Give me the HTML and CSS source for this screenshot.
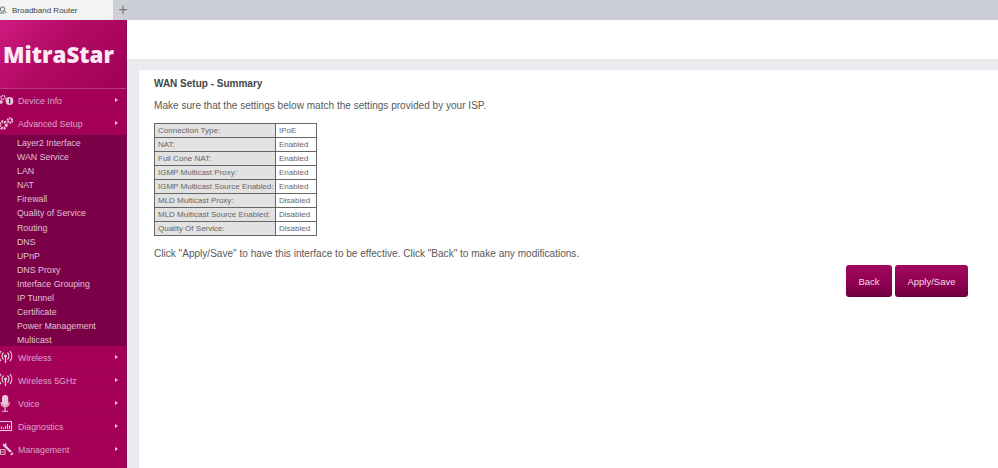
FILE: index.html
```html
<!DOCTYPE html>
<html lang="en">
<head>
<meta charset="utf-8">
<title>Broadband Router</title>
<link rel="stylesheet" href="styles.css">
</head>
<body>
<div class="tabbar">
  <div class="tab">
    <svg class="tab-icon" viewBox="0 0 8 8"><circle cx="3" cy="3" r="2.600" fill="none" stroke="#555" stroke-width="1"/><path d="M5 5l2.600 2.600M0 7.500h5" stroke="#555" stroke-width="1"/></svg>
    <span>Broadband Router</span>
  </div>
  <div class="newtab">+</div>
</div>
<div class="page">
  <aside class="side">
    <div class="logo"><span>MitraStar</span></div>
    <nav class="menu">
      <div class="item">
        <svg class="ic" viewBox="0 0 18 18"><circle cx="3" cy="6.500" r="2" fill="none" stroke="#e6c7d8" stroke-width="1.600" stroke-dasharray="1.200 .7"/><circle cx="1" cy="11" r="1.800" fill="#e6c7d8"/><circle cx="9.500" cy="10" r="3.900" fill="#e6c7d8"/><rect x="9" y="7.500" width="1.200" height="5" fill="#7a1050"/></svg>
        <span class="lbl">Device Info</span><i class="arr"></i>
      </div>
      <div class="item">
        <svg class="ic" viewBox="0 0 18 18"><circle cx="3" cy="11" r="3.300" fill="none" stroke="#e6c7d8" stroke-width="2.800" stroke-dasharray="1.800 .9"/><circle cx="10" cy="6.500" r="2.200" fill="none" stroke="#e6c7d8" stroke-width="2.200" stroke-dasharray="1.400 .7"/></svg>
        <span class="lbl">Advanced Setup</span><i class="arr"></i>
      </div>
      <div class="sub">
        <a>Layer2 Interface</a><a>WAN Service</a><a>LAN</a><a>NAT</a><a>Firewall</a><a>Quality of Service</a><a>Routing</a><a>DNS</a><a>UPnP</a><a>DNS Proxy</a><a>Interface Grouping</a><a>IP Tunnel</a><a>Certificate</a><a>Power Management</a><a>Multicast</a>
      </div>
      <div class="item">
        <svg class="ic" viewBox="0 0 18 18"><circle cx="5.500" cy="8" r="1.600" fill="#e6c7d8"/><path d="M5.500 9v6" stroke="#e6c7d8" stroke-width="1.300"/><path d="M3.500 4.500a5 5 0 0 0 0 7M7.500 4.500a5 5 0 0 1 0 7M1 3a8 8 0 0 0 0 10M10 3a8 8 0 0 1 0 10" fill="none" stroke="#e6c7d8" stroke-width="1.200"/></svg>
        <span class="lbl">Wireless</span><i class="arr"></i>
      </div>
      <div class="item">
        <svg class="ic" viewBox="0 0 18 18"><circle cx="5.500" cy="8" r="1.600" fill="#e6c7d8"/><path d="M5.500 9v6" stroke="#e6c7d8" stroke-width="1.300"/><path d="M3.500 4.500a5 5 0 0 0 0 7M7.500 4.500a5 5 0 0 1 0 7M1 3a8 8 0 0 0 0 10M10 3a8 8 0 0 1 0 10" fill="none" stroke="#e6c7d8" stroke-width="1.200"/></svg>
        <span class="lbl">Wireless 5GHz</span><i class="arr"></i>
      </div>
      <div class="item">
        <svg class="ic" viewBox="0 0 18 18"><rect x="2" y="1" width="6.200" height="11" rx="3" fill="#e6c7d8"/><path d="M1 8c0 6.500 8.200 6.500 8.200 0M5.100 13.500v3.500M2 17.300h6.200" fill="none" stroke="#e6c7d8" stroke-width="1.100"/></svg>
        <span class="lbl">Voice</span><i class="arr"></i>
      </div>
      <div class="item">
        <svg class="ic" viewBox="0 0 18 18"><rect x="-.5" y="4.500" width="12" height="9" fill="none" stroke="#e6c7d8" stroke-width="1.100"/><path d="M1.500 12V9.500M3.500 12V10.500M5.500 12V9M7.500 12V7M9.500 12V8.500" stroke="#e6c7d8" stroke-width="1.100"/></svg>
        <span class="lbl">Diagnostics</span><i class="arr"></i>
      </div>
      <div class="item">
        <svg class="ic" viewBox="0 0 18 18"><path d="M4 5l7 7" stroke="#e6c7d8" stroke-width="2.400"/><path d="M2.500 3.500l2.500 1 0-2 2 2.500-3 2.500zM10 14.500l3-2.500.2 2.500-2 .7z" fill="#e6c7d8"/><path d="M.5 9.500h4.500v5H.5zM.5 12h4" fill="none" stroke="#e6c7d8" stroke-width=".9"/></svg>
        <span class="lbl">Management</span><i class="arr"></i>
      </div>
    </nav>
  </aside>
  <div class="right">
    <div class="topwhite"></div>
    <div class="band"></div>
    <main class="panel">
      <h1>WAN Setup - Summary</h1>
      <p class="intro">Make sure that the settings below match the settings provided by your ISP.</p>
      <table class="summary">
        <tr><td>Connection Type:</td><td>IPoE</td></tr>
        <tr><td>NAT:</td><td>Enabled</td></tr>
        <tr><td>Full Cone NAT:</td><td>Enabled</td></tr>
        <tr><td>IGMP Multicast Proxy:</td><td>Enabled</td></tr>
        <tr><td>IGMP Multicast Source Enabled:</td><td>Enabled</td></tr>
        <tr><td>MLD Multicast Proxy:</td><td>Disabled</td></tr>
        <tr><td>MLD Multicast Source Enabled:</td><td>Disabled</td></tr>
        <tr><td>Quality Of Service:</td><td>Disabled</td></tr>
      </table>
      <p class="note">Click "Apply/Save" to have this interface to be effective. Click "Back" to make any modifications.</p>
      <div class="actions">
        <button class="btn back">Back</button>
        <button class="btn apply">Apply/Save</button>
      </div>
    </main>
  </div>
</div>
</body>
</html>
```
FILE: styles.css
```css
html, body {
  margin: 0;
  padding: 0;
  width: 998px;
  height: 468px;
  overflow: hidden;
  background: #fff;
  font-family: "Liberation Sans", Arial, sans-serif;
  color: #4a4a4a;
}
.tabbar {
  height: 20px;
  background: #ccd0d6;
  display: flex;
  align-items: stretch;
}
.tab {
  width: 113px;
  background: #f1f3f4;
  display: flex;
  align-items: center;
  font-size: 8px;
  color: #444;
}
.tab-icon {
  width: 7px;
  height: 8px;
  margin-right: 5px;
  flex: none;
}
.newtab {
  width: 20px;
  text-align: center;
  font-size: 16px;
  line-height: 20px;
  color: #70757a;
}
.page {
  display: flex;
  height: 448px;
}
.side {
  width: 127px;
  flex: none;
  box-sizing: border-box;
  background: #a8005a;
  border-right: 1px solid #8a0a50;
}
.logo {
  height: 69px;
  box-sizing: border-box;
  padding: 22px 0 0 3px;
  background: linear-gradient(135deg, #d01a80 0%, #b10a64 45%, #a00058 100%);
  border-bottom: 1px solid #b63a80;
}
.logo span {
  font-family: "Open Sans", "Liberation Sans", sans-serif;
  font-weight: 800;
  font-size: 22.300px;
  line-height: 25px;
  color: #fbeaf3;
  display: block;
}
.item {
  height: 23px;
  display: flex;
  align-items: center;
  background: #a50058;
  border-bottom: 1px solid #980452;
  box-sizing: border-box;
  color: #d8a8c6;
  font-size: 8.800px;
}
.ic {
  width: 18px;
  height: 18px;
  flex: none;
  overflow: visible;
}
.lbl {
  flex: 1;
  display: block;
  padding-top: 1px;
}
.arr {
  width: 0;
  height: 0;
  margin-right: 8px;
  border-left: 3px solid #e8cfdc;
  border-top: 2px solid transparent;
  border-bottom: 2px solid transparent;
}
.sub {
  background: #7c0048;
  padding: 1px 0 0 17px;
  height: 211px;
  box-sizing: border-box;
}
.sub a {
  display: block;
  height: 14.100px;
  line-height: 14px;
  font-size: 8.800px;
  color: #e0c0d3;
}
.right {
  flex: 1;
  display: flex;
  flex-direction: column;
  min-width: 0;
  background: #e9ebef;
}
.topwhite {
  height: 39px;
  background: #fff;
}
.band {
  height: 11px;
  background: #e9ebef;
}
.panel {
  flex: 1;
  margin-left: 12px;
  background: #fff;
  box-sizing: border-box;
  padding: 7px 30px 0 15px;
}
.panel h1 {
  margin: 0;
  font-size: 10px;
  line-height: 13px;
  font-weight: 700;
  color: #444;
}
.intro {
  margin: 9px 0 0;
  font-size: 10.070px;
  line-height: 13px;
  color: #595959;
}
.summary {
  margin-top: 11px;
  border-collapse: collapse;
  font-size: 8px;
  color: #666;
}
.summary td {
  height: 13px;
  padding: 0 1px 0 3px;
  border: 1px solid #666;
  line-height: 13px;
  white-space: nowrap;
}
.summary td:first-child {
  width: 116px;
  background: #e2e2e2;
}
.summary td:last-child {
  width: 36px;
  background: #fff;
}
.note {
  margin: 11px 0 0;
  font-size: 10.070px;
  line-height: 13px;
  color: #595959;
}
.actions {
  display: flex;
  justify-content: flex-end;
  gap: 3px;
  margin-top: 5px;
}
.btn {
  height: 32px;
  border: 0;
  border-radius: 3px;
  padding: 0;
  background: linear-gradient(180deg, #a3085e 0%, #8e0050 60%, #6c003c 100%);
  color: #f7dbea;
  font-family: "Liberation Sans", Arial, sans-serif;
  font-size: 9.500px;
}
.back { width: 46px; }
.apply { width: 73px; }
```
